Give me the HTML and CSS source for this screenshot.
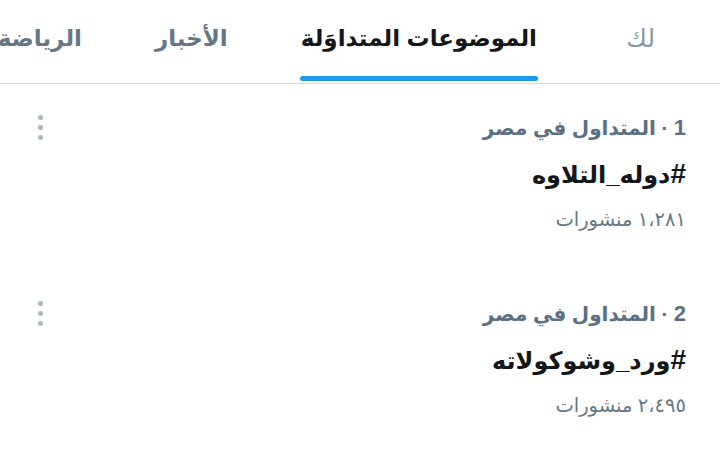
FILE: index.html
```html
<!DOCTYPE html>
<html lang="ar" dir="rtl">
<head>
<meta charset="utf-8">
<title>المتداول</title>
<link rel="stylesheet" href="styles.css">
</head>
<body>
<nav class="tabs">
  <div class="tab tab-light">لك</div>
  <div class="tab tab-active">الموضوعات المتداوَلة</div>
  <div class="tab">الأخبار</div>
  <div class="tab">الرياضة</div>
</nav>
<main class="list">
  <section class="trend">
    <div class="trend-body">
      <div class="meta"><span class="rank">1</span> · المتداول في مصر</div>
      <div class="tag"><span class="hash">#</span>دوله_التلاوه</div>
      <div class="count">١،٢٨١ منشورات</div>
    </div>
    <div class="more"><span></span><span></span><span></span></div>
  </section>
  <section class="trend">
    <div class="trend-body">
      <div class="meta"><span class="rank">2</span> · المتداول في مصر</div>
      <div class="tag"><span class="hash">#</span>ورد_وشوكولاته</div>
      <div class="count">٢،٤٩٥ منشورات</div>
    </div>
    <div class="more"><span></span><span></span><span></span></div>
  </section>
</main>
</body>
</html>
```
FILE: styles.css
```css
* { box-sizing: border-box; }
html, body { margin: 0; padding: 0; background: #fff; }
body {
  width: 720px;
  height: 454px;
  overflow: hidden;
  font-family: "Liberation Sans", "DejaVu Sans", sans-serif;
  color: #14171a;
}
.tabs {
  display: flex;
  flex-wrap: nowrap;
  gap: 73px;
  height: 84px;
  padding-right: 65px;
  border-bottom: 1px solid #d3dbe1;
  overflow: hidden;
}
.tab {
  position: relative;
  flex: none;
  white-space: nowrap;
  font-size: 23px;
  font-weight: bold;
  color: #657786;
  line-height: 30px;
  padding-top: 23px;
}
.tab-light {
  font-weight: normal;
  font-size: 25px;
  color: #8899a6;
  min-width: 45px;
}
.tab-active { color: #14171a; }
.tab-active::after {
  content: "";
  position: absolute;
  left: -1px;
  right: -1px;
  top: 76px;
  height: 5px;
  border-radius: 3px;
  background: #1d9bf0;
}
.trend {
  display: flex;
  justify-content: space-between;
  height: 186px;
  padding: 29px 34px 0 30px;
}
.meta {
  font-size: 20px;
  font-weight: bold;
  color: #5b7083;
  line-height: 30px;
}
.rank { font-size: 22px; }
.tag {
  margin-top: 16px;
  font-size: 24px;
  font-weight: bold;
  color: #14171a;
  line-height: 30px;
}
.hash { font-size: 28px; }
.count {
  margin-top: 14px;
  font-size: 19.5px;
  color: #657786;
  line-height: 30px;
}
.more {
  display: flex;
  flex-direction: column;
  gap: 5px;
  width: 20px;
  align-items: center;
  padding-top: 2px;
}
.more span {
  width: 5px;
  height: 5px;
  border-radius: 50%;
  background: #aab8c2;
}
```
